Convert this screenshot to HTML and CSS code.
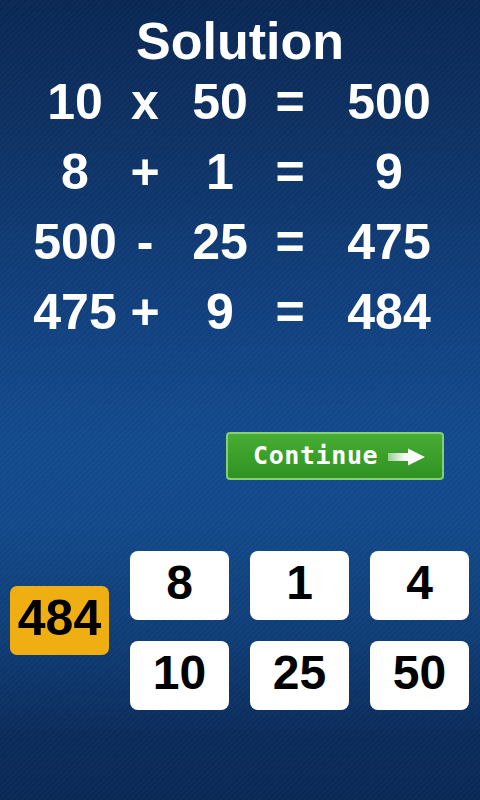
FILE: index.html
```html
<!DOCTYPE html>
<html>
<head>
<meta charset="utf-8">
<link rel="stylesheet" href="styles.css">
</head>
<body>
<div class="screen">
  <h1 class="title">Solution</h1>
  <div class="equations">
    <span>10</span><span>x</span><span>50</span><span>=</span><span>500</span>
    <span>8</span><span>+</span><span>1</span><span>=</span><span>9</span>
    <span>500</span><span>-</span><span>25</span><span>=</span><span>475</span>
    <span>475</span><span>+</span><span>9</span><span>=</span><span>484</span>
  </div>
  <div class="actions">
    <button class="continue">
      <span class="label">Continue</span>
      <svg class="arrow" width="37" height="18" viewBox="0 0 37 18">
        <defs>
          <linearGradient id="ag" x1="0" y1="0" x2="1" y2="0">
            <stop offset="0" stop-color="#ffffff" stop-opacity="0.5"/>
            <stop offset="0.45" stop-color="#ffffff" stop-opacity="0.95"/>
            <stop offset="1" stop-color="#ffffff" stop-opacity="1"/>
          </linearGradient>
        </defs>
        <path d="M0 5 H20 V0.5 L37 9 L20 17.5 V13 H0 Z" fill="url(#ag)"/>
      </svg>
    </button>
  </div>
  <div class="board">
    <div class="target">484</div>
    <div class="tiles">
      <div class="tile">8</div>
      <div class="tile">1</div>
      <div class="tile">4</div>
      <div class="tile">10</div>
      <div class="tile">25</div>
      <div class="tile">50</div>
    </div>
  </div>
</div>
</body>
</html>
```

FILE: styles.css
```css
html, body {
  margin: 0;
  padding: 0;
}
body {
  width: 480px;
  height: 800px;
  overflow: hidden;
  font-family: "Liberation Sans", Arial, sans-serif;
}
.screen {
  width: 480px;
  height: 800px;
  box-sizing: border-box;
  padding-top: 15px;
  background:
    repeating-linear-gradient(135deg, rgba(255,255,255,0.015) 0 2px, rgba(0,0,0,0.02) 2px 4px),
    linear-gradient(180deg, #0a2855 0%, #0e3366 18%, #11407e 38%, #134b8f 55%, #134a8c 65%, #0f3d76 80%, #0b2c5c 92%, #0a2956 100%);
}
.title {
  margin: 0;
  font-size: 52px;
  line-height: 52px;
  font-weight: bold;
  color: #ffffff;
  text-align: center;
}
.equations {
  display: grid;
  grid-template-columns: 90px 50px 100px 40px 158px;
  grid-auto-rows: 70px;
  padding-left: 30px;
  font-size: 50px;
  line-height: 70px;
  font-weight: bold;
  color: #ffffff;
  text-align: center;
}
.equations span {
  white-space: nowrap;
}
.actions {
  display: flex;
  justify-content: flex-end;
  padding-right: 36px;
  margin-top: 85px;
}
.continue {
  width: 218px;
  height: 48px;
  box-sizing: border-box;
  margin: 0;
  padding: 0 0 0 25px;
  display: flex;
  align-items: center;
  gap: 10px;
  border: 2px solid #86cf6e;
  border-radius: 4px;
  background: linear-gradient(180deg, #47ad34 0%, #3aa02a 50%, #2f9222 100%);
  color: #ffffff;
  cursor: pointer;
}
.label {
  font-family: "DejaVu Sans Mono", "Liberation Mono", monospace;
  font-weight: bold;
  font-size: 25px;
  line-height: 1;
  letter-spacing: 0.6px;
  padding-bottom: 2px;
}
.arrow {
  display: block;
  margin-top: 1px;
}
.board {
  display: flex;
  align-items: flex-start;
  margin-top: 71px;
  padding-left: 10px;
  gap: 21px;
}
.target {
  width: 99px;
  height: 69px;
  margin-top: 35px;
  box-sizing: border-box;
  padding-bottom: 6px;
  display: flex;
  align-items: center;
  justify-content: center;
  background: #efaf12;
  border-radius: 7px;
  font-size: 50px;
  font-weight: bold;
  color: #000000;
}
.tiles {
  display: grid;
  grid-template-columns: repeat(3, 99px);
  grid-auto-rows: 69px;
  column-gap: 21px;
  row-gap: 21px;
}
.tile {
  box-sizing: border-box;
  padding-bottom: 6px;
  display: flex;
  align-items: center;
  justify-content: center;
  background: #ffffff;
  border-radius: 8px;
  font-size: 48px;
  font-weight: bold;
  color: #000000;
}
```
